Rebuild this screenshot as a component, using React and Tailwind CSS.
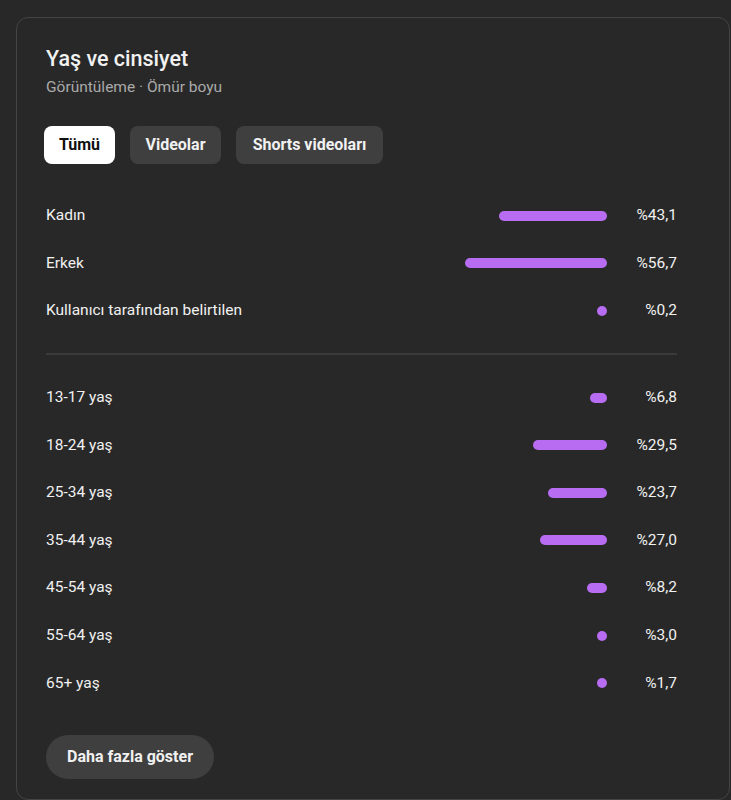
import React from "react";

const genders = [
  { label: "Kadın", value: 43.1 },
  { label: "Erkek", value: 56.7 },
  { label: "Kullanıcı tarafından belirtilen", value: 0.2 },
];

const ages = [
  { label: "13-17 yaş", value: 6.8 },
  { label: "18-24 yaş", value: 29.5 },
  { label: "25-34 yaş", value: 23.7 },
  { label: "35-44 yaş", value: 27.0 },
  { label: "45-54 yaş", value: 8.2 },
  { label: "55-64 yaş", value: 3.0 },
  { label: "65+ yaş", value: 1.7 },
];

function fmt(v) {
  return "%" + v.toFixed(1).replace(".", ",");
}

function Row({ label, value }) {
  const width = Math.max(10, value * 2.5);
  return (
    <div className="flex items-center h-[47.6px] text-[15.5px] text-[#f1f1f1]">
      <span className="flex-1">{label}</span>
      <div className="h-[10px] rounded-full bg-[#b86cf2]" style={{ width: `${width}px` }}></div>
      <span className="w-[70px] text-right">{fmt(value)}</span>
    </div>
  );
}

export default function App() {
  return (
    <div className="min-h-[800px] bg-[#282828] pt-[17px] pl-4 overflow-hidden" style={{ fontFamily: "Roboto, 'Noto Sans', sans-serif" }}>
      <div className="w-[714px] border border-[#444444] rounded-[12px] pt-[27px] pl-[29px] pb-[20px]">
        <h2 className="text-[21.5px] leading-[28px] font-medium text-[#f1f1f1]">Yaş ve cinsiyet</h2>
        <div className="mt-[4px] text-[15.5px] leading-[20px] text-[#aaaaaa]">Görüntüleme · Ömür boyu</div>

        <div className="flex gap-[15px] mt-[29px] -ml-[2px]">
          <button className="h-[38px] w-[71px] rounded-[8px] bg-white text-[#0f0f0f] text-[16px] font-bold">Tümü</button>
          <button className="h-[38px] w-[91px] rounded-[8px] bg-[#3f3f3f] text-[#f1f1f1] text-[16px] font-bold">Videolar</button>
          <button className="h-[38px] w-[147px] rounded-[8px] bg-[#3f3f3f] text-[#f1f1f1] text-[16px] font-bold">Shorts videoları</button>
        </div>

        <div className="w-[631px] mt-[28px]">
          {genders.map((g) => (
            <Row key={g.label} {...g} />
          ))}
          <div className="h-[2px] bg-[#3a3a3a] mt-[18px] mb-[19px]"></div>
          {ages.map((a) => (
            <Row key={a.label} {...a} />
          ))}
        </div>

        <button className="mt-[28px] h-[44px] w-[168px] rounded-full bg-[#3f3f3f] text-[#f1f1f1] text-[16px] font-bold">
          Daha fazla göster
        </button>
      </div>
    </div>
  );
}
